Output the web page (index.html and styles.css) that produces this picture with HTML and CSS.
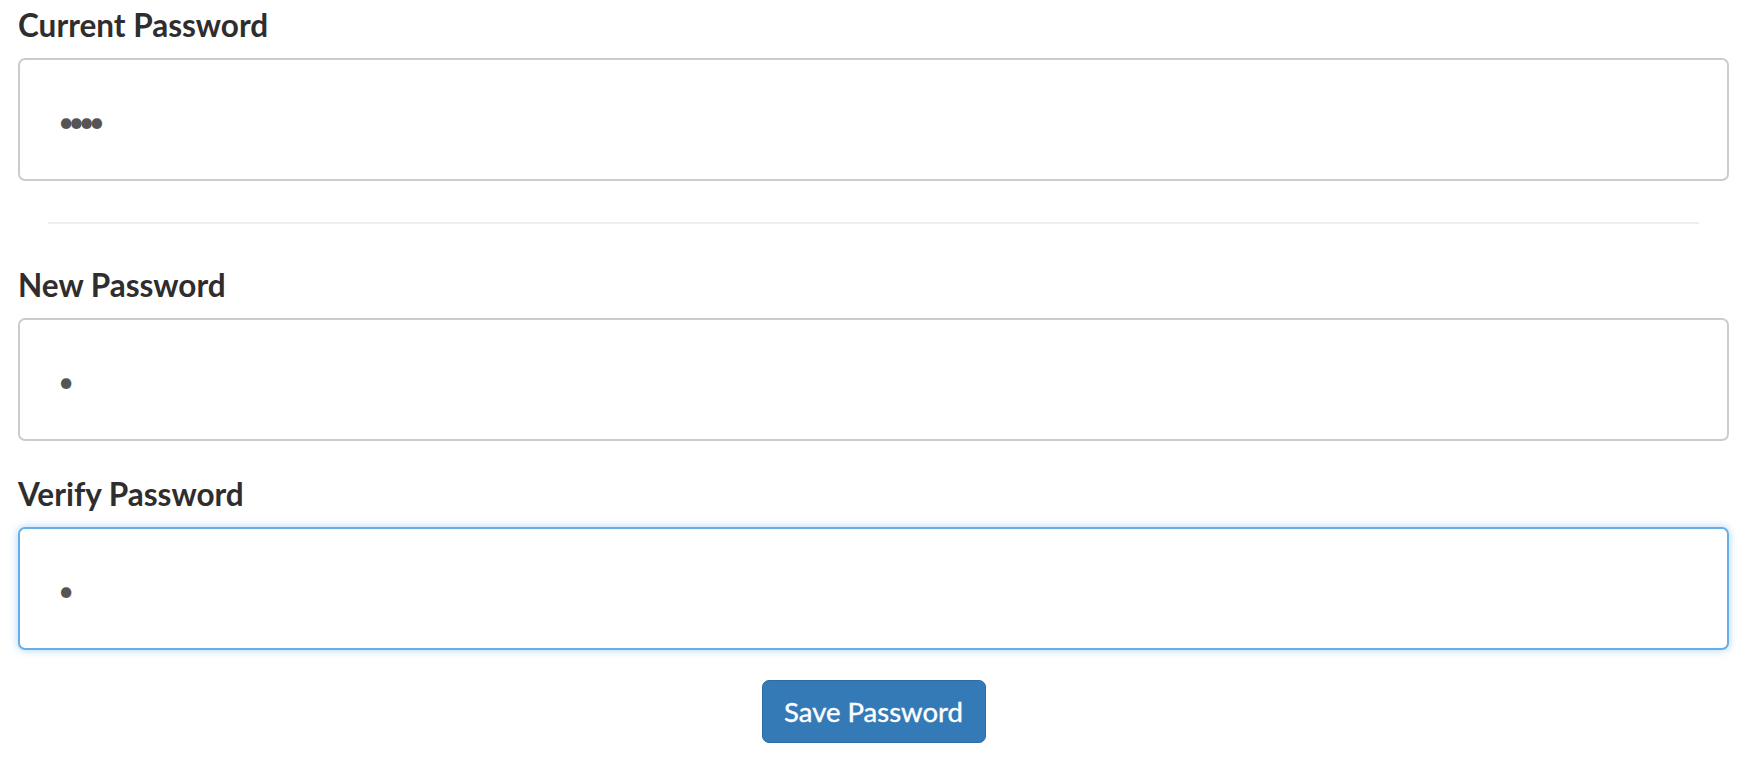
FILE: index.html
```html
<!DOCTYPE html>
<html lang="en">
<head>
<meta charset="utf-8">
<title>Change Password</title>
<link rel="stylesheet" href="styles.css">
</head>
<body>
<form class="pw-form">
  <div class="field">
    <label class="field-label">Current Password</label>
    <div class="field-input"><span class="dots">••••</span></div>
  </div>
  <hr class="divider">
  <div class="field">
    <label class="field-label">New Password</label>
    <div class="field-input"><span class="dots">•</span></div>
  </div>
  <div class="field field-next">
    <label class="field-label">Verify Password</label>
    <div class="field-input is-focused"><span class="dots">•</span></div>
  </div>
  <div class="actions">
    <button type="button" class="btn-primary">Save Password</button>
  </div>
</form>
</body>
</html>
```

FILE: styles.css
```css
html, body {
  margin: 0;
  padding: 0;
  background: #ffffff;
}

body {
  font-family: Lato, "Open Sans", "Liberation Sans", sans-serif;
  color: #333333;
}

.pw-form {
  display: flex;
  flex-direction: column;
  padding: 7px 25px 0 18px;
}

.field {
  display: flex;
  flex-direction: column;
}

.field-next {
  margin-top: 35px;
}

.field-label {
  font-weight: 700;
  font-size: 31.5px;
  line-height: 36px;
  color: #2f2d2d;
  margin-bottom: 15px;
}

.field-input {
  box-sizing: border-box;
  height: 123px;
  border: 2px solid #cccccc;
  border-radius: 7px;
  background: #fff;
  display: flex;
  align-items: center;
  padding: 2px 0 0 38px;
}

.field-input.is-focused {
  border-color: #66afe9;
  box-shadow: 0 0 8px rgba(102, 175, 233, 0.55);
}

.dots {
  font-size: 28px;
  line-height: 30px;
  color: #555555;
  letter-spacing: -6px;
}

.divider {
  border: 0;
  border-top: 2px solid #eeeeee;
  margin: 41px 30px 43px 30px;
  height: 0;
}

.actions {
  display: flex;
  justify-content: center;
  margin-top: 30px;
}

.btn-primary {
  font-family: Lato, "Open Sans", "Liberation Sans", sans-serif;
  font-size: 27.5px;
  font-weight: 400;
  color: #ffffff;
  background: #337ab7;
  border: 1px solid #2e6da4;
  border-radius: 7px;
  width: 224px;
  height: 63px;
  padding: 0;
  cursor: pointer;
  -webkit-text-stroke: 0.4px #ffffff;
}
```
